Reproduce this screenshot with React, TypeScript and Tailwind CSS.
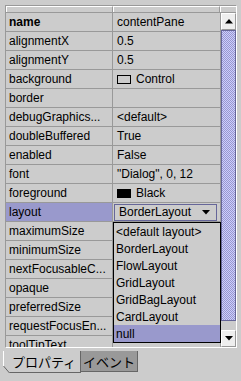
import React from "react";

const ROWS: { name: string; value?: string; swatch?: "control" | "black"; bold?: boolean; combo?: boolean }[] = [
  { name: "name", value: "contentPane", bold: true },
  { name: "alignmentX", value: "0.5" },
  { name: "alignmentY", value: "0.5" },
  { name: "background", value: "Control", swatch: "control" },
  { name: "border", value: "" },
  { name: "debugGraphics...", value: "<default>" },
  { name: "doubleBuffered", value: "True" },
  { name: "enabled", value: "False" },
  { name: "font", value: "\"Dialog\", 0, 12" },
  { name: "foreground", value: "Black", swatch: "black" },
  { name: "layout", combo: true },
  { name: "maximumSize", value: "" },
  { name: "minimumSize", value: "" },
  { name: "nextFocusableC...", value: "" },
  { name: "opaque", value: "" },
  { name: "preferredSize", value: "" },
  { name: "requestFocusEn...", value: "" },
  { name: "toolTipText", value: "" },
];

const OPTIONS = ["<default layout>", "BorderLayout", "FlowLayout", "GridLayout", "GridBagLayout", "CardLayout", "null"];

export default function App() {
  return (
    <div
      className="relative w-[241px] h-[381px] overflow-hidden bg-[#cccccc] text-[12px] leading-none text-black"
      style={{ fontFamily: '"Liberation Sans", Arial, sans-serif' }}
    >
      {/* scroll pane */}
      <div className="absolute left-[5px] top-[5px] w-[232px] h-[343px] border border-[#999999] border-r-white border-b-white flex flex-col">
        {/* header */}
        <div className="flex h-[7px] border-b border-[#999999] shrink-0">
          <div className="w-[107px] border-t border-l border-white border-r border-r-[#999999]" />
          <div className="w-[107px] border-t border-l border-white border-r border-r-[#999999]" />
          <div className="flex-1 border-t border-l border-white" />
        </div>

        <div className="flex flex-1 min-h-0">
          {/* table */}
          <div className="w-[214px] overflow-hidden">
            {ROWS.map((r) => (
              <div key={r.name} className="flex h-[19px] border-b border-[#999999] shrink-0">
                <div
                  className={`w-[107px] border-r border-[#999999] pl-[3px] flex items-center whitespace-nowrap ${
                    r.combo ? "bg-[#9999cc]" : ""
                  } ${r.bold ? "font-bold" : ""}`}
                >
                  {r.name}
                </div>
                <div className="w-[107px] flex items-center pl-[4px] whitespace-nowrap">
                  {r.combo ? (
                    <div className="ml-[-3px] w-[103px] h-[17px] border border-[#666699] bg-[#cccccc] flex items-center pl-[4px] pr-[6px] justify-between">
                      <span>BorderLayout</span>
                      <svg width="8" height="5" viewBox="0 0 8 5">
                        <path d="M0 0h8L4 4.5z" fill="#000" />
                      </svg>
                    </div>
                  ) : (
                    <>
                      {r.swatch && (
                        <span
                          className={`inline-block w-[14px] h-[9px] border border-black mr-[5px] ${
                            r.swatch === "black" ? "bg-black" : "bg-[#cccccc]"
                          }`}
                        />
                      )}
                      {r.value}
                    </>
                  )}
                </div>
              </div>
            ))}
          </div>

          {/* scrollbar */}
          <div className="w-[16px] flex flex-col border-l border-[#999999]">
            <div className="h-[17px] bg-[#eeeeee] border border-white border-r-[#999999] border-b-[#999999] flex items-center justify-center">
              <svg width="8" height="5" viewBox="0 0 8 5">
                <path d="M0 4.5h8L4 0z" fill="#000" />
              </svg>
            </div>
            <div className="h-[291px] border border-[#666699] bg-[#ccccff] bg-[repeating-conic-gradient(#9999cc_0_25%,#ccccff_0_50%)] bg-[length:2px_2px]" />
            <div className="flex-1 bg-[#cccccc]" />
            <div className="h-[17px] bg-[#eeeeee] border border-white border-r-[#999999] border-b-[#999999] flex items-center justify-center">
              <svg width="8" height="5" viewBox="0 0 8 5">
                <path d="M0 0h8L4 4.5z" fill="#000" />
              </svg>
            </div>
          </div>
        </div>
      </div>

      {/* popup list */}
      <div className="absolute left-[113px] top-[222px] w-[108px] border border-black bg-[#cccccc] flex flex-col">
        {OPTIONS.map((o) => (
          <div
            key={o}
            className={`h-[17px] flex items-center pl-[2px] whitespace-nowrap ${o === "null" ? "bg-[#9999cc]" : ""}`}
          >
            {o}
          </div>
        ))}
      </div>

      {/* tabs */}
      <div
        className="absolute left-[3px] top-[351px] flex h-[22px] text-[13px]"
        style={{ fontFamily: '"Noto Sans CJK JP", sans-serif' }}
      >
        <div className="relative w-[78px] h-full bg-[#cccccc] border-r border-b border-[#666666] border-l border-l-white flex items-center justify-center pl-[4px]">
          <svg className="absolute left-[-1px] bottom-[-1px]" width="7" height="7" viewBox="0 0 7 7">
            <path d="M0 0L7 7H0z" fill="#cccccc" />
            <path d="M0.5 0L6.5 7" stroke="#666666" />
          </svg>
          プロパティ
        </div>
        <div className="w-[57px] h-[21px] bg-[#999999] border-r border-b border-[#666666] flex items-center justify-center">
          イベント
        </div>
      </div>
    </div>
  );
}
